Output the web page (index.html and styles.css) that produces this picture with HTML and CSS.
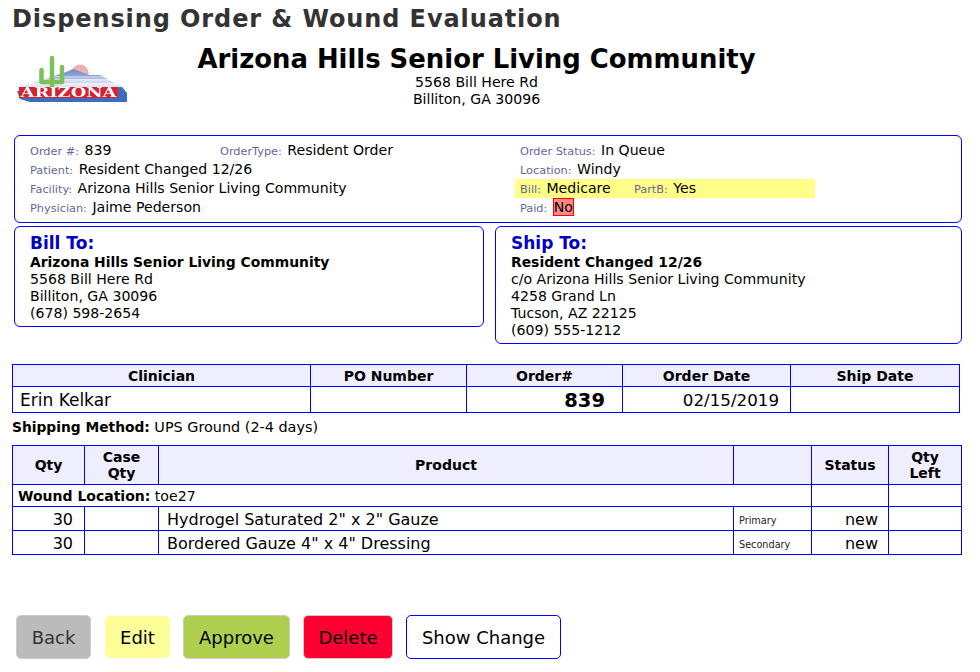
FILE: index.html
```html
<!DOCTYPE html>
<html lang="en">
<head>
    <meta charset="UTF-8">
    <title>Dispensing Order &amp; Wound Evaluation</title>
    <link rel="stylesheet" href="styles.css">
</head>
<body>
    <h1 class="page-title">Dispensing Order &amp; Wound Evaluation</h1>

    <div class="facility-head">
        <svg class="logo" width="116" height="52" viewBox="0 0 116 52">
            <defs>
                <linearGradient id="hills" x1="0" y1="0" x2="0" y2="1">
                    <stop offset="0" stop-color="#6f8cc8"/>
                    <stop offset="0.35" stop-color="#8ea4d6"/>
                    <stop offset="0.35" stop-color="#c4cfe8"/>
                    <stop offset="0.55" stop-color="#a9b9df"/>
                    <stop offset="0.55" stop-color="#e4e8f4"/>
                    <stop offset="0.75" stop-color="#c8d2ea"/>
                    <stop offset="0.75" stop-color="#f0f2f9"/>
                    <stop offset="1" stop-color="#d6dcef"/>
                </linearGradient>
                <filter id="soft">
                    <feGaussianBlur stdDeviation="0.35"/>
                </filter>
            </defs>
            <g filter="url(#soft)">
                <circle cx="66" cy="20" r="8.5" fill="#eeb0b0"/>
                <path d="M4 35 L52 19 L59 16 L76 22 L86 22 L110 35 Z" fill="url(#hills)"/>
                <path d="M3 38 L108 34 L113 40 L113 49 L16 49 L6 46 Z" fill="#3f6cc0"/>
                <path d="M38 35 V5 M38 29 H27.500 V17 M38 29 H48 V14" fill="none" stroke="#7cc05c" stroke-width="4.500" stroke-linecap="round" stroke-linejoin="round"/>
                <rect x="5" y="34" width="99" height="11" fill="#d8202e"/>
                <text class="logo-text" x="54.500" y="44" text-anchor="middle" textLength="96" lengthAdjust="spacingAndGlyphs">ARIZONA</text>
            </g>
        </svg>
        <div class="facility-info">
            <div class="facility-name">Arizona Hills Senior Living Community</div>
            <div>5568 Bill Here Rd</div>
            <div>Billiton, GA 30096</div>
        </div>
    </div>

    <div class="order-box">
        <div class="order-col">
            <div class="info-row">
                <span class="order-num"><span class="lbl">Order #:</span> 839</span>
                <span><span class="lbl">OrderType:</span> Resident Order</span>
            </div>
            <div class="info-row"><span><span class="lbl">Patient:</span> Resident Changed 12/26</span></div>
            <div class="info-row"><span><span class="lbl">Facility:</span> Arizona Hills Senior Living Community</span></div>
            <div class="info-row"><span><span class="lbl">Physician:</span> Jaime Pederson</span></div>
        </div>
        <div class="order-col right-col">
            <div class="info-row"><span><span class="lbl">Order Status:</span> In Queue</span></div>
            <div class="info-row"><span><span class="lbl">Location:</span> Windy</span></div>
            <div class="info-row bill-row">
                <span class="bill"><span class="lbl">Bill:</span> Medicare</span>
                <span><span class="lbl">PartB:</span> Yes</span>
            </div>
            <div class="info-row"><span><span class="lbl">Paid:</span> <span class="unpaid">No</span></span></div>
        </div>
    </div>

    <div class="address-row">
        <div class="address bill-to">
            <div class="address-title">Bill To:</div>
            <b>Arizona Hills Senior Living Community</b>
            <div>5568 Bill Here Rd</div>
            <div>Billiton, GA 30096</div>
            <div>(678) 598-2654</div>
        </div>
        <div class="address ship-to">
            <div class="address-title">Ship To:</div>
            <b>Resident Changed 12/26</b>
            <div>c/o Arizona Hills Senior Living Community</div>
            <div>4258 Grand Ln</div>
            <div>Tucson, AZ 22125</div>
            <div>(609) 555-1212</div>
        </div>
    </div>

    <table class="grid summary">
        <tr>
            <th class="c-clin">Clinician</th>
            <th class="c-po">PO Number</th>
            <th class="c-ord">Order#</th>
            <th class="c-date">Order Date</th>
            <th>Ship Date</th>
        </tr>
        <tr>
            <td class="big">Erin Kelkar</td>
            <td></td>
            <td class="order-no">839</td>
            <td class="num">02/15/2019</td>
            <td></td>
        </tr>
    </table>

    <div class="shipping"><b>Shipping Method:</b> <span class="ship-val">UPS Ground (2-4 days)</span></div>

    <table class="grid products">
        <tr class="head">
            <th class="c-qty">Qty</th>
            <th class="c-case">Case<br>Qty</th>
            <th>Product</th>
            <th class="c-type"></th>
            <th class="c-status">Status</th>
            <th class="c-left">Qty<br>Left</th>
        </tr>
        <tr class="wound">
            <td colspan="4"><b>Wound Location:</b> toe27</td>
            <td></td>
            <td></td>
        </tr>
        <tr>
            <td class="qty">30</td>
            <td></td>
            <td class="prod">Hydrogel Saturated 2" x 2" Gauze</td>
            <td class="type">Primary</td>
            <td class="stat">new</td>
            <td></td>
        </tr>
        <tr>
            <td class="qty">30</td>
            <td></td>
            <td class="prod">Bordered Gauze 4" x 4" Dressing</td>
            <td class="type">Secondary</td>
            <td class="stat">new</td>
            <td></td>
        </tr>
    </table>

    <div class="button-group">
        <button type="button" class="btn btn-back">Back</button>
        <button type="button" class="btn btn-edit">Edit</button>
        <button type="button" class="btn btn-approve">Approve</button>
        <button type="button" class="btn btn-delete">Delete</button>
        <button type="button" class="btn btn-change">Show Change</button>
    </div>
</body>
</html>
```

FILE: styles.css
```css
body {
    margin: 0;
    padding: 0 12px;
    font-family: "DejaVu Sans", Verdana, sans-serif;
    font-size: 14.1px;
    color: #000;
    background: #fff;
    overflow: hidden;
}
.page-title {
    margin: 0;
    padding-top: 5px;
    font-size: 24px;
    line-height: 28px;
    letter-spacing: 0.9px;
    color: #333;
}
.facility-head {
    display: flex;
    height: 102px;
    line-height: 17px;
}
.logo {
    margin: 20px 0 0 2px;
    flex: none;
}
.logo-text {
    font-family: "DejaVu Serif", serif;
    font-weight: bold;
    font-size: 13px;
    fill: #fff;
}
.facility-info {
    flex: 1;
    text-align: center;
    padding-right: 145px;
}
.facility-name {
    font-size: 25.9px;
    font-weight: bold;
    line-height: 30px;
    margin-top: 11px;
}
.order-box {
    display: flex;
    box-sizing: border-box;
    width: 948px;
    height: 88px;
    margin-left: 2px;
    padding: 5px 0 0 15px;
    border: 1px solid #00f;
    border-radius: 6px;
}
.order-col {
    flex: none;
    width: 485px;
}
.info-row {
    display: flex;
    height: 19px;
    line-height: 19px;
    white-space: nowrap;
}
.order-num {
    width: 190px;
}
.lbl {
    font-size: 11.3px;
    margin-right: 1px;
    color: #669;
}
.right-col .info-row {
    padding-left: 5px;
    width: 300px;
    box-sizing: border-box;
}
.bill-row {
    background: #ff8;
}
.bill {
    width: 114px;
}
.unpaid {
    background: #f88;
    outline: 1px solid #f00;
    outline-offset: -1px;
    padding: 1px;
}
.address-row {
    display: flex;
    align-items: flex-start;
    margin: 3px 0 0 2px;
    gap: 11px;
}
.address {
    box-sizing: border-box;
    padding: 6px 15px 4px;
    border: 1px solid #00f;
    border-radius: 6px;
    line-height: 17px;
}
.address b {
    font-size: 13.9px;
}
.bill-to {
    width: 470px;
    height: 101px;
}
.ship-to {
    width: 467px;
    height: 118px;
}
.address-title {
    font-size: 17px;
    font-weight: bold;
    line-height: 21px;
    color: #00c;
}
.grid {
    border-collapse: collapse;
    table-layout: fixed;
    background: #fff;
}
.grid th,
.grid td {
    border: 1px solid #00f;
    padding: 0 4px;
}
.grid th {
    background: #eef;
    font-size: 14px;
    line-height: 16px;
}
.summary {
    width: 948px;
    margin-top: 20px;
}
.summary th {
    height: 21px;
}
.summary td {
    height: 24px;
    padding-top: 1px;
}
.c-clin { width: 289px; }
.c-po { width: 147px; }
.c-ord { width: 147px; }
.c-date { width: 159px; }
.big {
    font-size: 17px;
}
.summary .big:first-child {
    padding-left: 7px;
}
.summary .num {
    font-size: 16.7px;
    text-align: right;
    padding-right: 11px;
}
.grid .order-no {
    font-size: 19.5px;
    font-weight: bold;
    text-align: right;
    padding-right: 17px;
}
.shipping {
    height: 32px;
    line-height: 28px;
}
.shipping b {
    font-size: 13.8px;
}
.ship-val {
    font-size: 14.4px;
}
.products {
    width: 950px;
}
.products .head th {
    height: 38px;
}
.c-qty { width: 63px; }
.c-case { width: 65px; }
.c-type { width: 69px; }
.c-status { width: 68px; }
.c-left { width: 64px; }
.wound td {
    height: 21px;
    padding-left: 5px;
}
.wound b {
    font-size: 14px;
}
.grid .qty,
.grid .prod,
.grid .stat {
    font-size: 16px;
    height: 21px;
    padding-top: 2px;
    padding-bottom: 0;
}
.grid .qty {
    text-align: right;
    padding-right: 11px;
}
.grid .prod {
    padding-left: 8px;
}
.grid .stat {
    text-align: right;
    padding-right: 10px;
}
.grid .type {
    font-size: 9.7px;
    padding: 4px 0 0 5px;
    color: #222;
}
.button-group {
    display: flex;
    align-items: center;
    gap: 13px;
    margin: 60px 0 0 4px;
}
.btn {
    height: 44px;
    padding: 0;
    font-family: inherit;
    font-size: 18px;
    border: 1px solid #ccc;
    border-radius: 5px;
    color: #000;
}
.btn-back { background: #bbb; color: #333; width: 75px; margin-right: 1px; }
.btn-edit { background: #ff9; height: 42px; width: 65px; border-color: #ff9; }
.btn-approve { background: #aed04e; width: 107px; }
.btn-delete { background: #f03; width: 90px; }
.btn-change { background: #fff; border-color: #00f; width: 155px; }
```
